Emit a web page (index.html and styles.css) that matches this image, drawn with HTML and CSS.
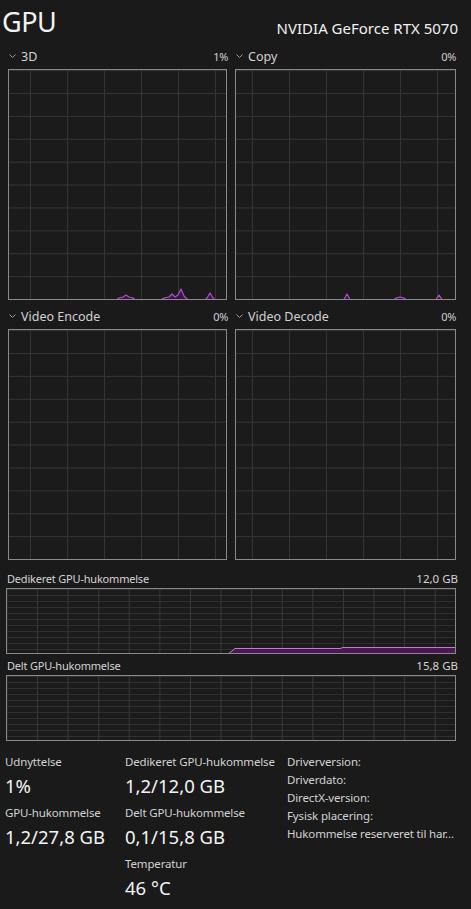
FILE: index.html
```html
<!DOCTYPE html>
<html lang="da">
<head>
<meta charset="utf-8">
<title>GPU</title>
<link rel="stylesheet" href="styles.css">
</head>
<body>
<div class="page">
  <header class="head">
    <h1 class="title">GPU</h1>
    <div class="model">NVIDIA GeForce RTX 5070</div>
  </header>

  <div class="engines">
    <section class="engine">
      <div class="elabel">
        <svg class="chev" width="7" height="5" viewBox="0 0 7 5"><polyline points="0.5,0.5 3.5,3.5 6.5,0.5" fill="none" stroke="#9a9a9a" stroke-width="1"/></svg>
        <span class="ename">3D</span>
        <span class="pct">1%</span>
      </div>
      <div class="graph g-left">
        <svg class="data" viewBox="0 0 217 229" preserveAspectRatio="none">
          <g fill="#3a1544" stroke="#b24ec4" stroke-width="1.2" stroke-linejoin="round">
            <polyline points="106,231 110,228 114,227 117,225 120,227 124,228 128,231"/>
            <polyline points="150,231 155,228 160,227 163,224 166,227 169,225 172,219 175,226 177,228 180,231"/>
            <polyline points="195,231 198,228 201,223 204,228 207,231"/>
          </g>
        </svg>
      </div>
    </section>
    <section class="engine">
      <div class="elabel">
        <svg class="chev" width="7" height="5" viewBox="0 0 7 5"><polyline points="0.5,0.5 3.5,3.5 6.5,0.5" fill="none" stroke="#9a9a9a" stroke-width="1"/></svg>
        <span class="ename">Copy</span>
        <span class="pct">0%</span>
      </div>
      <div class="graph g-right">
        <svg class="data" viewBox="0 0 219 229" preserveAspectRatio="none">
          <g fill="#3a1544" stroke="#b24ec4" stroke-width="1.2" stroke-linejoin="round">
            <polyline points="107,231 111,224 115,231"/>
            <polyline points="157,231 160,228 164,227 168,228 171,231"/>
            <polyline points="199,231 203,225 207,231"/>
          </g>
        </svg>
      </div>
    </section>
    <section class="engine">
      <div class="elabel">
        <svg class="chev" width="7" height="5" viewBox="0 0 7 5"><polyline points="0.5,0.5 3.5,3.5 6.5,0.5" fill="none" stroke="#9a9a9a" stroke-width="1"/></svg>
        <span class="ename">Video Encode</span>
        <span class="pct">0%</span>
      </div>
      <div class="graph g-left"></div>
    </section>
    <section class="engine">
      <div class="elabel">
        <svg class="chev" width="7" height="5" viewBox="0 0 7 5"><polyline points="0.5,0.5 3.5,3.5 6.5,0.5" fill="none" stroke="#9a9a9a" stroke-width="1"/></svg>
        <span class="ename">Video Decode</span>
        <span class="pct">0%</span>
      </div>
      <div class="graph g-right"></div>
    </section>
  </div>

  <section class="mem mem-first">
    <div class="mlabel"><span>Dedikeret GPU-hukommelse</span><span>12,0 GB</span></div>
    <div class="mgraph">
      <svg class="data" viewBox="0 0 448 64" preserveAspectRatio="none">
        <polygon points="221,65 228,59.5 333,59.5 336,58.5 448,58.5 448,65" fill="#4b1854"/>
        <polyline points="221,65 228,59.5 333,59.5 336,58.5 449,58.5" fill="none" stroke="#c978d2" stroke-width="1"/>
      </svg>
    </div>
  </section>
  <section class="mem">
    <div class="mlabel"><span>Delt GPU-hukommelse</span><span>15,8 GB</span></div>
    <div class="mgraph"></div>
  </section>

  <div class="stats">
    <div class="col col1">
      <div class="lbl">Udnyttelse</div>
      <div class="val">1%</div>
      <div class="lbl">GPU-hukommelse</div>
      <div class="val">1,2/27,8 GB</div>
    </div>
    <div class="col col2">
      <div class="lbl">Dedikeret GPU-hukommelse</div>
      <div class="val">1,2/12,0 GB</div>
      <div class="lbl">Delt GPU-hukommelse</div>
      <div class="val">0,1/15,8 GB</div>
      <div class="lbl">Temperatur</div>
      <div class="val">46 °C</div>
    </div>
    <div class="col col3">
      <div class="info">Driverversion:</div>
      <div class="info">Driverdato:</div>
      <div class="info">DirectX-version:</div>
      <div class="info">Fysisk placering:</div>
      <div class="info">Hukommelse reserveret til har...</div>
    </div>
  </div>
</div>
</body>
</html>
```

FILE: styles.css
```css
* { box-sizing: border-box; }
html, body {
  margin: 0;
  padding: 0;
  background: #1a1a1a;
}
body {
  font-family: "Noto Sans", "Open Sans", sans-serif;
  color: #d6d6d6;
  width: 471px;
  height: 909px;
  overflow: hidden;
}
.page {
  padding: 0 13px 0 0;
}
.head {
  height: 44px;
  display: flex;
  justify-content: space-between;
  align-items: flex-start;
  padding-left: 2px;
}
.title {
  margin: 0;
  font-weight: 400;
  font-size: 27px;
  line-height: 44px;
  color: #f2f2f2;
  letter-spacing: -0.5px;
}
.model {
  font-size: 15px;
  line-height: 20px;
  margin-top: 18px;
  color: #f2f2f2;
}
.engines {
  display: grid;
  grid-template-columns: 220px 221px;
  column-gap: 7px;
  row-gap: 4px;
  padding-left: 8px;
}
.elabel {
  height: 25px;
  display: flex;
  align-items: center;
  font-size: 12.5px;
  color: #d2d2d2;
}
.chev {
  margin: 0 5px 0 1px;
  flex: none;
}
.ename {
  flex: 1;
}
.pct {
  font-size: 11px;
  color: #cfcfcf;
  letter-spacing: -0.3px;
}
.graph {
  height: 231px;
  border: 1px solid #8a8a8a;
  background-color: #1b1b1b;
  background-image:
    linear-gradient(to right, #343434 1px, transparent 1px),
    linear-gradient(to bottom, #343434 1px, transparent 1px);
  background-size: 37px 22.9px, 37px 22.9px;
}
.g-left {
  width: 219px;
  background-position: 21px 0, 0 23px;
}
.g-right {
  width: 221px;
  background-position: 16px 0, 0 23px;
}
.data {
  display: block;
  width: 100%;
  height: 100%;
  overflow: hidden;
}
.mem {
  padding-left: 6px;
  margin-top: 2px;
}
.mem-first {
  margin-top: 9px;
}
.mlabel {
  height: 19px;
  display: flex;
  justify-content: space-between;
  align-items: center;
  font-size: 11px;
  letter-spacing: -0.2px;
  color: #d4d4d4;
  padding-left: 1px;
}
.mlabel span:last-child {
  letter-spacing: 0;
  font-size: 11.5px;
}
.mgraph {
  height: 66px;
  width: 450px;
  border: 1px solid #8a8a8a;
  background-color: #1b1b1b;
  background-image:
    linear-gradient(to right, #383838 1px, transparent 1px),
    linear-gradient(to bottom, #303030 1px, transparent 1px);
  background-size: 30.6px 6px, 30.6px 6px;
  background-position: 30px 0, 0 6px;
}
.stats {
  margin-top: 9px;
  padding-left: 5px;
  display: grid;
  grid-template-columns: 120px 162px 1fr;
}
.lbl {
  height: 22px;
  padding-top: 2px;
  line-height: 20px;
  font-size: 11.5px;
  letter-spacing: -0.15px;
  color: #d2d2d2;
  white-space: nowrap;
}
.val {
  height: 29px;
  line-height: 28px;
  font-size: 18.5px;
  color: #f4f4f4;
  white-space: nowrap;
}
.info {
  line-height: 18px;
  font-size: 11.5px;
  letter-spacing: -0.15px;
  color: #d2d2d2;
  white-space: nowrap;
}
.col3 {
  padding-top: 3px;
}
```
